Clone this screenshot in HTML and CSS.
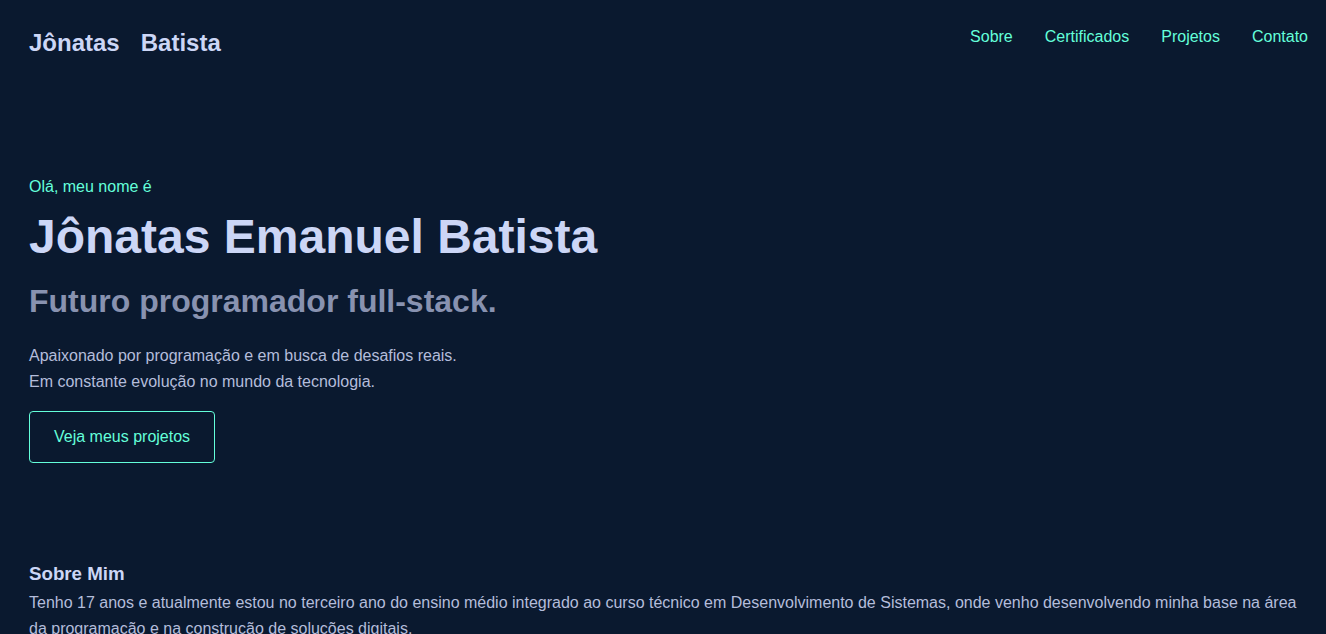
FILE: index.html
```html
<!DOCTYPE html>
<html lang="pt-BR">
<head>
<meta charset="utf-8">
<title>Jônatas Batista</title>
<link rel="stylesheet" href="styles.css">
</head>
<body>
<header class="site-header">
  <div class="logo"><span>Jônatas</span><span>Batista</span></div>
  <nav class="nav">
    <a href="#sobre">Sobre</a>
    <a href="#certificados">Certificados</a>
    <a href="#projetos">Projetos</a>
    <a href="#contato">Contato</a>
  </nav>
</header>
<main class="main">
  <section class="hero">
    <p class="hero-intro">Olá, meu nome é</p>
    <h1 class="hero-name">Jônatas Emanuel Batista</h1>
    <h2 class="hero-sub">Futuro programador full-stack.</h2>
    <p class="hero-text">Apaixonado por programação e em busca de desafios reais.<br>Em constante evolução no mundo da tecnologia.</p>
    <a class="btn" href="#projetos">Veja meus projetos</a>
  </section>
  <section class="about" id="sobre">
    <h3 class="about-title">Sobre Mim</h3>
    <p class="about-text">Tenho 17 anos e atualmente estou no terceiro ano do ensino médio integrado ao curso técnico em Desenvolvimento de Sistemas, onde venho desenvolvendo minha base na área da programação e na construção de soluções digitais.</p>
  </section>
</main>
</body>
</html>
```

FILE: styles.css
```css
html, body {
  margin: 0;
  padding: 0;
  background: #0a192f;
  font-family: "Liberation Sans", Arial, sans-serif;
  color: #a8b2d1;
}

.site-header {
  display: flex;
  justify-content: space-between;
  align-items: flex-start;
  padding: 29px 18px 0 29px;
}

.logo {
  display: flex;
  gap: 21px;
  font-size: 24px;
  font-weight: bold;
  color: #ccd6f6;
}

.nav {
  display: flex;
  gap: 32px;
  margin-top: -1px;
}

.nav a {
  color: #64ffda;
  text-decoration: none;
  font-size: 16px;
}

.main {
  padding: 0 24px 0 29px;
}

.hero {
  padding-top: 121px;
}

.hero-intro {
  margin: 0;
  font-size: 16px;
  color: #64ffda;
}

.hero-name {
  margin: 13px 0 0;
  font-size: 48px;
  font-weight: bold;
  color: #ccd6f6;
}

.hero-sub {
  margin: 19px 0 0;
  font-size: 32px;
  font-weight: bold;
  color: #8892b0;
}

.hero-text {
  margin: 23px 0 0;
  font-size: 16px;
  line-height: 26px;
  color: #b4bddb;
}

.btn {
  display: inline-block;
  margin-top: 16px;
  padding: 16px 24px;
  border: 1px solid #64ffda;
  border-radius: 4px;
  color: #64ffda;
  font-size: 16px;
  text-decoration: none;
}

.about {
  padding-top: 101px;
}

.about-title {
  margin: 0;
  font-size: 18.72px;
  line-height: 20px;
  font-weight: bold;
  color: #ccd6f6;
}

.about-text {
  margin: 6px 0 0;
  font-size: 16px;
  line-height: 26px;
  color: #b4bddb;
}
```
